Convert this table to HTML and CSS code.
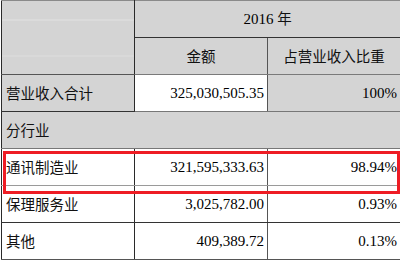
FILE: index.html
```html
<!DOCTYPE html>
<html lang="zh">
<head>
<meta charset="utf-8">
<link rel="stylesheet" href="styles.css">
</head>
<body>
<div class="wrap">
<table class="t">
  <colgroup><col class="c1"><col class="c2"><col class="c3"></colgroup>
  <tr class="r-top">
    <td rowspan="2" class="corner g"></td>
    <td colspan="2" class="ctr g">2016 <span class="zh">年</span></td>
  </tr>
  <tr class="r-sub">
    <td class="ctr g zh">金额</td>
    <td class="ctr g zh">占营业收入比重</td>
  </tr>
  <tr class="r-total">
    <td class="lab g zh">营业收入合计</td>
    <td class="num">325,030,505.35</td>
    <td class="num g">100%</td>
  </tr>
  <tr class="r-sec">
    <td colspan="3" class="lab g zh">分行业</td>
  </tr>
  <tr class="r-hl">
    <td class="lab zh">通讯制造业</td>
    <td class="num">321,595,333.63</td>
    <td class="num">98.94%</td>
  </tr>
  <tr class="r-b">
    <td class="lab zh">保理服务业</td>
    <td class="num">3,025,782.00</td>
    <td class="num">0.93%</td>
  </tr>
  <tr>
    <td class="lab zh">其他</td>
    <td class="num">409,389.72</td>
    <td class="num">0.13%</td>
  </tr>
</table>
<div class="mark"></div>
</div>
</body>
</html>
```
FILE: styles.css
```css
html, body {
  margin: 0;
  padding: 0;
  background: #ffffff;
}
.wrap {
  position: relative;
  width: 400px;
  height: 261px;
  overflow: hidden;
}
.t {
  margin-left: 1px;
  width: 399px;
  border-collapse: collapse;
  table-layout: fixed;
  font-family: "Liberation Serif", "Noto Sans CJK SC", serif;
  font-size: 15px;
  color: #000;
}
.c1 { width: 133px; }
.c2 { width: 133px; }
.c3 { width: 133px; }
.t td {
  height: 36px;
  padding: 0 3px;
  line-height: 1;
  vertical-align: middle;
  border: 1px solid #555;
  white-space: nowrap;
  background: #ffffff;
}
.t .zh {
  font-family: "Noto Sans CJK SC", sans-serif;
  font-size: 14.5px;
  color: #111;
}
.t td.g { background: #d4d4d4; }
.t .ctr { text-align: center; }
.t .num { text-align: right; }
.t .lab { text-align: left; padding-left: 4px; }
.t td.corner {
  border-left: 1px solid #2a2a2a;
  border-right: 1px solid #2a2a2a;
  background: linear-gradient(#d4d4d4 0 18px, #e2e2e2 18px 19px, #d4d4d4 19px 54px, #dedede 54px 55px, #d4d4d4 55px);
}
.r-top td { border-top: 1px solid #8a8a8a; }
.r-top td:last-child { border-right: 1px solid #8a8a8a; border-bottom: 1px solid #333; }
.r-sub td { border-bottom: 1px solid #7a7a7a; }
.r-sub td:last-child { border-right: 1px solid #8a8a8a; }
.t tr td:first-child { border-left: 1px solid #2a2a2a; }
.r-total td:first-child { border-right: 1px solid #2a2a2a; border-bottom: 1px solid #333; }
.r-total td { border-bottom: 1px solid #777; }
.r-total td:last-child { border-right: 1px solid #8a8a8a; }
.r-sec td { border-bottom: 1px solid #777; border-right: 1px solid #8a8a8a; }
.r-hl td { border-bottom: 1px solid #9a9a9a; }
.r-hl td:first-child, .r-b td:first-child, tr:last-child td:first-child { border-right: 1px solid #2a2a2a; }
.r-b td { border-bottom: 1px solid #333; }
.mark {
  position: absolute;
  left: 3px;
  top: 151px;
  width: 391px;
  height: 37px;
  border: 3px solid #ee1c24;
}
```
